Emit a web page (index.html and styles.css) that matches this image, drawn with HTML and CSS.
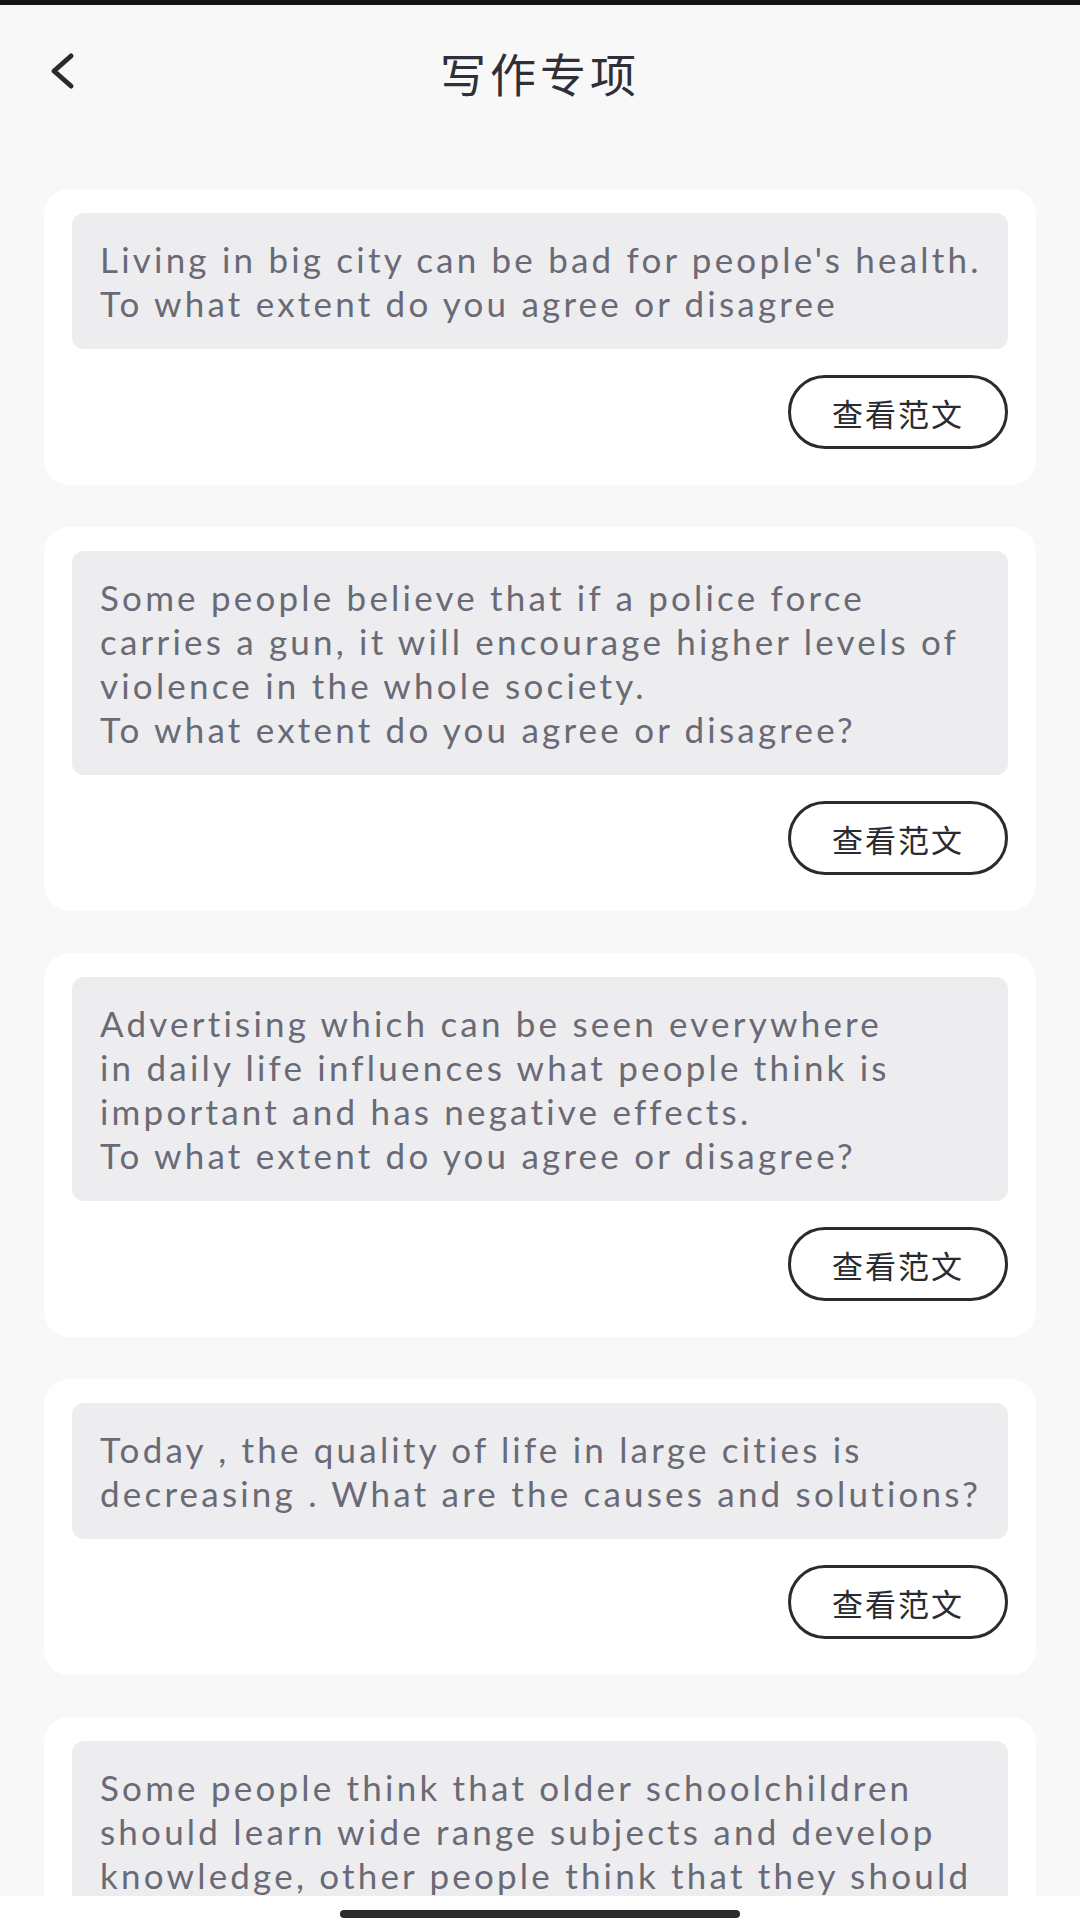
FILE: index.html
```html
<!DOCTYPE html>
<html lang="zh-CN">
<head>
  <meta charset="UTF-8">
  <meta name="viewport" content="width=device-width, initial-scale=1.0">
  <title>写作专项</title>
  <link rel="stylesheet" href="styles.css">
</head>
<body>
  <div class="status-bar"></div>

  <header class="nav">
    <a class="back" href="#">
      <svg width="30" height="40" viewBox="0 0 30 40">
        <polyline points="21,4 4,19 21,34" fill="none" stroke="#2b2b2e" stroke-width="5" stroke-linecap="round" stroke-linejoin="round"/>
      </svg>
    </a>
    <h1>写作专项</h1>
  </header>

  <main class="list">
    <div class="card">
      <div class="topic">
        Living in big city can be bad for people's health.<br>
        To what extent do you agree or disagree
      </div>
      <div class="actions"><button class="btn">查看范文</button></div>
    </div>

    <div class="card">
      <div class="topic">
        Some people believe that if a police force<br>
        carries a gun, it will encourage higher levels of<br>
        violence in the whole society.<br>
        To what extent do you agree or disagree?
      </div>
      <div class="actions"><button class="btn">查看范文</button></div>
    </div>

    <div class="card">
      <div class="topic">
        Advertising which can be seen everywhere<br>
        in daily life influences what people think is<br>
        important and has negative effects.<br>
        To what extent do you agree or disagree?
      </div>
      <div class="actions"><button class="btn">查看范文</button></div>
    </div>

    <div class="card">
      <div class="topic">
        Today , the quality of life in large cities is<br>
        decreasing . What are the causes and solutions?
      </div>
      <div class="actions"><button class="btn">查看范文</button></div>
    </div>

    <div class="card">
      <div class="topic">
        Some people think that older schoolchildren<br>
        should learn wide range subjects and develop<br>
        knowledge, other people think that they should<br>
        focus on a few subjects.<br>
        Discuss both views and give your opinion.
      </div>
      <div class="actions"><button class="btn">查看范文</button></div>
    </div>
  </main>

  <div class="home-bar"><span></span></div>
</body>
</html>
```

FILE: styles.css
```css
body {
  margin: 0;
  background: #f8f8f9;
  font-family: "Lato", "Noto Sans CJK SC", sans-serif;
  color: #333;
}
.status-bar {
  height: 5px;
  background: #151515;
}
.nav {
  position: relative;
  height: 134px;
  display: flex;
  align-items: center;
  justify-content: center;
}
.nav h1 {
  margin: 0;
  font-family: "Noto Sans CJK SC", sans-serif;
  font-weight: 400;
  font-size: 46px;
  letter-spacing: 4px;
  color: #2f2f35;
}
.back {
  position: absolute;
  left: 50px;
  top: 47px;
  display: block;
  line-height: 0;
}
.list {
  padding: 50px 44px 0;
  display: flex;
  flex-direction: column;
  gap: 42px;
}
.card {
  background: #fff;
  border-radius: 26px;
  padding: 24px 28px 36px;
}
.topic {
  background: #ededf0;
  border-radius: 12px;
  padding: 24px 28px;
  font-size: 35px;
  line-height: 44px;
  letter-spacing: 3.2px;
  color: #6a6a76;
  white-space: nowrap;
}
.actions {
  display: flex;
  justify-content: flex-end;
  margin-top: 26px;
}
.btn {
  width: 220px;
  height: 74px;
  border: 3px solid #2a2a30;
  border-radius: 37px;
  background: #fff;
  font-family: "Noto Sans CJK SC", sans-serif;
  font-size: 31px;
  letter-spacing: 2px;
  color: #2a2a30;
  cursor: pointer;
}
.home-bar {
  position: fixed;
  left: 0;
  right: 0;
  bottom: 0;
  height: 24px;
  background: #fff;
  display: flex;
  justify-content: center;
  align-items: flex-end;
}
.home-bar span {
  width: 400px;
  height: 8px;
  margin-bottom: 2px;
  border-radius: 4px;
  background: #2b2b2e;
}
```
